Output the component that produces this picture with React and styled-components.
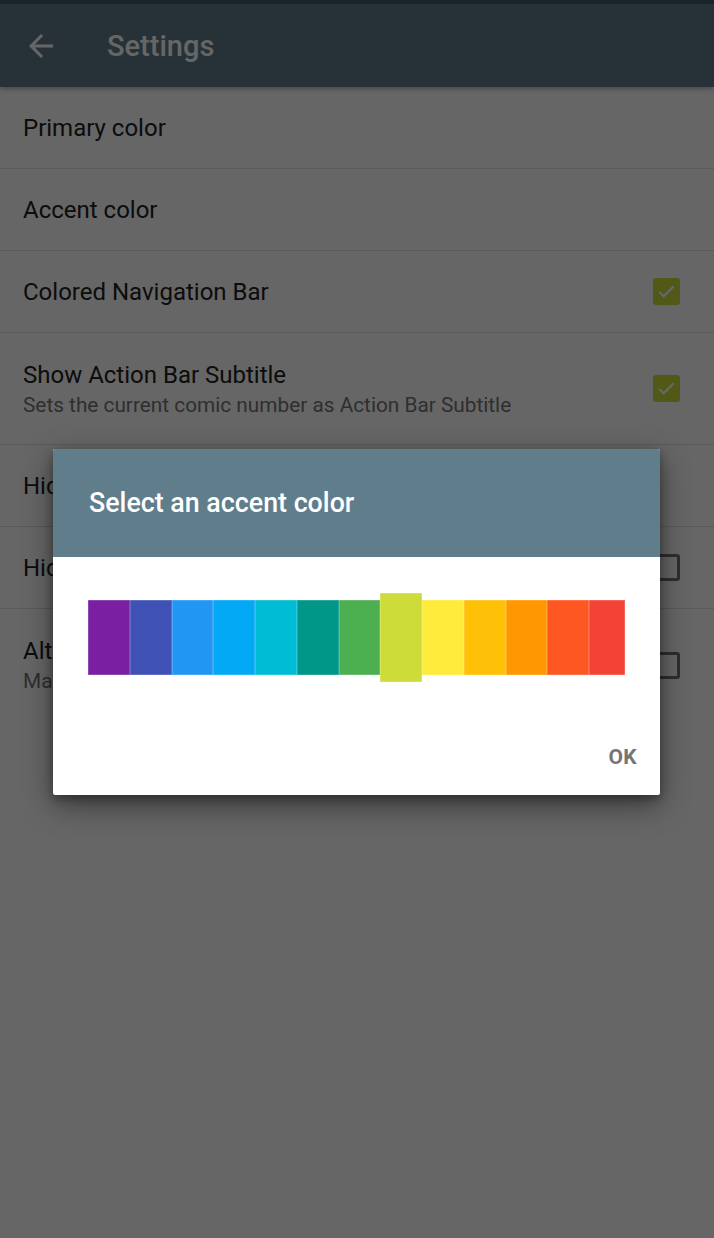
import React from 'react'
import styled, { createGlobalStyle } from 'styled-components'

const GlobalStyle = createGlobalStyle`
  html, body {
    margin: 0;
    padding: 0;
    background: #fff;
    font-family: Roboto, "Noto Sans", "Liberation Sans", sans-serif;
  }
  * { box-sizing: border-box; }
`

const Screen = styled.div`
  position: relative;
  width: 714px;
  height: 1238px;
  overflow: hidden;
  background: #fff;
`

const StatusBar = styled.div`
  height: 4px;
  background: #455a64;
`

const Toolbar = styled.header`
  height: 83px;
  background: #607d8b;
  display: flex;
  align-items: center;
  padding-left: 23px;
  gap: 48px;
  box-shadow: 0 2px 5px rgba(0, 0, 0, 0.3);
  position: relative;
  z-index: 1;
`

const Title = styled.h1`
  margin: 0;
  color: #fff;
  font-size: 29px;
  font-weight: 500;
`

const List = styled.div`
  display: flex;
  flex-direction: column;
`

const Row = styled.div`
  display: flex;
  align-items: center;
  justify-content: space-between;
  min-height: ${p => (p.$tall ? 112 : 82)}px;
  padding: 0 34px 0 23px;
  border-bottom: ${p => (p.$last ? 'none' : '1.5px solid #e0e0e0')};
`

const Texts = styled.div`
  display: flex;
  flex-direction: column;
  gap: 2px;
`

const RowTitle = styled.div`
  font-size: 24px;
  line-height: 30px;
  color: #212121;
  white-space: nowrap;
`

const RowSub = styled.div`
  font-size: 20.8px;
  line-height: 26px;
  color: #757575;
  white-space: nowrap;
`

const Box = styled.span`
  width: 27px;
  height: 27px;
  border-radius: 3px;
  flex-shrink: 0;
  display: flex;
  align-items: center;
  justify-content: center;
  background: ${p => (p.$checked ? '#cddc39' : 'transparent')};
  border: ${p => (p.$checked ? 'none' : '3px solid #737373')};
`

const Dim = styled.div`
  position: absolute;
  inset: 0;
  z-index: 5;
  background: rgba(0, 0, 0, 0.6);
  display: flex;
  justify-content: flex-start;
  align-items: flex-start;
  padding: 449px 0 0 53px;
`

const Dialog = styled.div`
  width: 607px;
  background: #fff;
  border-radius: 2px;
  overflow: hidden;
  box-shadow: 0 10px 30px rgba(0, 0, 0, 0.45), 0 4px 10px rgba(0, 0, 0, 0.3);
`

const DialogHead = styled.div`
  height: 108px;
  background: #607d8b;
  display: flex;
  align-items: center;
  padding-left: 36px;
`

const DialogTitle = styled.h2`
  margin: 0;
  color: #fff;
  font-size: 26.8px;
  font-weight: 500;
`

const DialogBody = styled.div`
  padding: 43px 35px 0 35px;
`

const Swatches = styled.div`
  display: grid;
  grid-template-columns: repeat(12, 41.75px) 36px;
  width: 537px;
  height: 75px;
`

const Swatch = styled.div`
  background: ${p => p.$color};
  margin: ${p => (p.$selected ? '-7px 0' : '0')};
  box-shadow: inset 0 0 0 0.5px rgba(255, 255, 255, 0.35);
`

const Actions = styled.div`
  display: flex;
  justify-content: flex-end;
  padding: 69px 23px 25px;
`

const OkButton = styled.button`
  border: none;
  background: none;
  padding: 0;
  font-family: inherit;
  font-size: 21px;
  line-height: 26px;
  font-weight: 700;
  color: #757575;
  letter-spacing: 0.3px;
`

const colors = [
  '#7b1fa2', '#3f51b5', '#2196f3', '#03a9f4', '#00bcd4', '#009688', '#4caf50',
  '#cddc39', '#ffeb3b', '#ffc107', '#ff9800', '#ff5722', '#f44336',
]

const rows = [
  { title: 'Primary color' },
  { title: 'Accent color' },
  { title: 'Colored Navigation Bar', box: true, checked: true },
  { title: 'Show Action Bar Subtitle', sub: 'Sets the current comic number as Action Bar Subtitle', box: true, checked: true },
  { title: 'Hide Floating Action Button' },
  { title: 'Hide Donate Button', box: true },
  { title: 'Alternative Sharing', sub: 'Makes sharing compatible with more apps', box: true, last: true },
]

const BackArrow = () => (
  <svg width="36" height="36" viewBox="0 0 24 24" fill="#fff">
    <path d="M20 11H7.83l5.59-5.59L12 4l-8 8 8 8 1.41-1.41L7.83 13H20v-2z" />
  </svg>
)

const Check = () => (
  <svg width="23" height="23" viewBox="0 0 24 24" fill="none" stroke="#fff" strokeWidth="2.4">
    <path d="M4.5 12.5l4.5 4.5L19.5 6.5" />
  </svg>
)

export default function App() {
  return (
    <Screen>
      <GlobalStyle />
      <StatusBar />
      <Toolbar>
        <BackArrow />
        <Title>Settings</Title>
      </Toolbar>
      <List>
        {rows.map(r => (
          <Row key={r.title} $tall={!!r.sub} $last={r.last}>
            <Texts>
              <RowTitle>{r.title}</RowTitle>
              {r.sub && <RowSub>{r.sub}</RowSub>}
            </Texts>
            {r.box && <Box $checked={r.checked}>{r.checked && <Check />}</Box>}
          </Row>
        ))}
      </List>
      <Dim>
        <Dialog>
          <DialogHead>
            <DialogTitle>Select an accent color</DialogTitle>
          </DialogHead>
          <DialogBody>
            <Swatches>
              {colors.map((c, i) => (
                <Swatch key={c} $color={c} $selected={i === 7} />
              ))}
            </Swatches>
          </DialogBody>
          <Actions>
            <OkButton>OK</OkButton>
          </Actions>
        </Dialog>
      </Dim>
    </Screen>
  )
}
